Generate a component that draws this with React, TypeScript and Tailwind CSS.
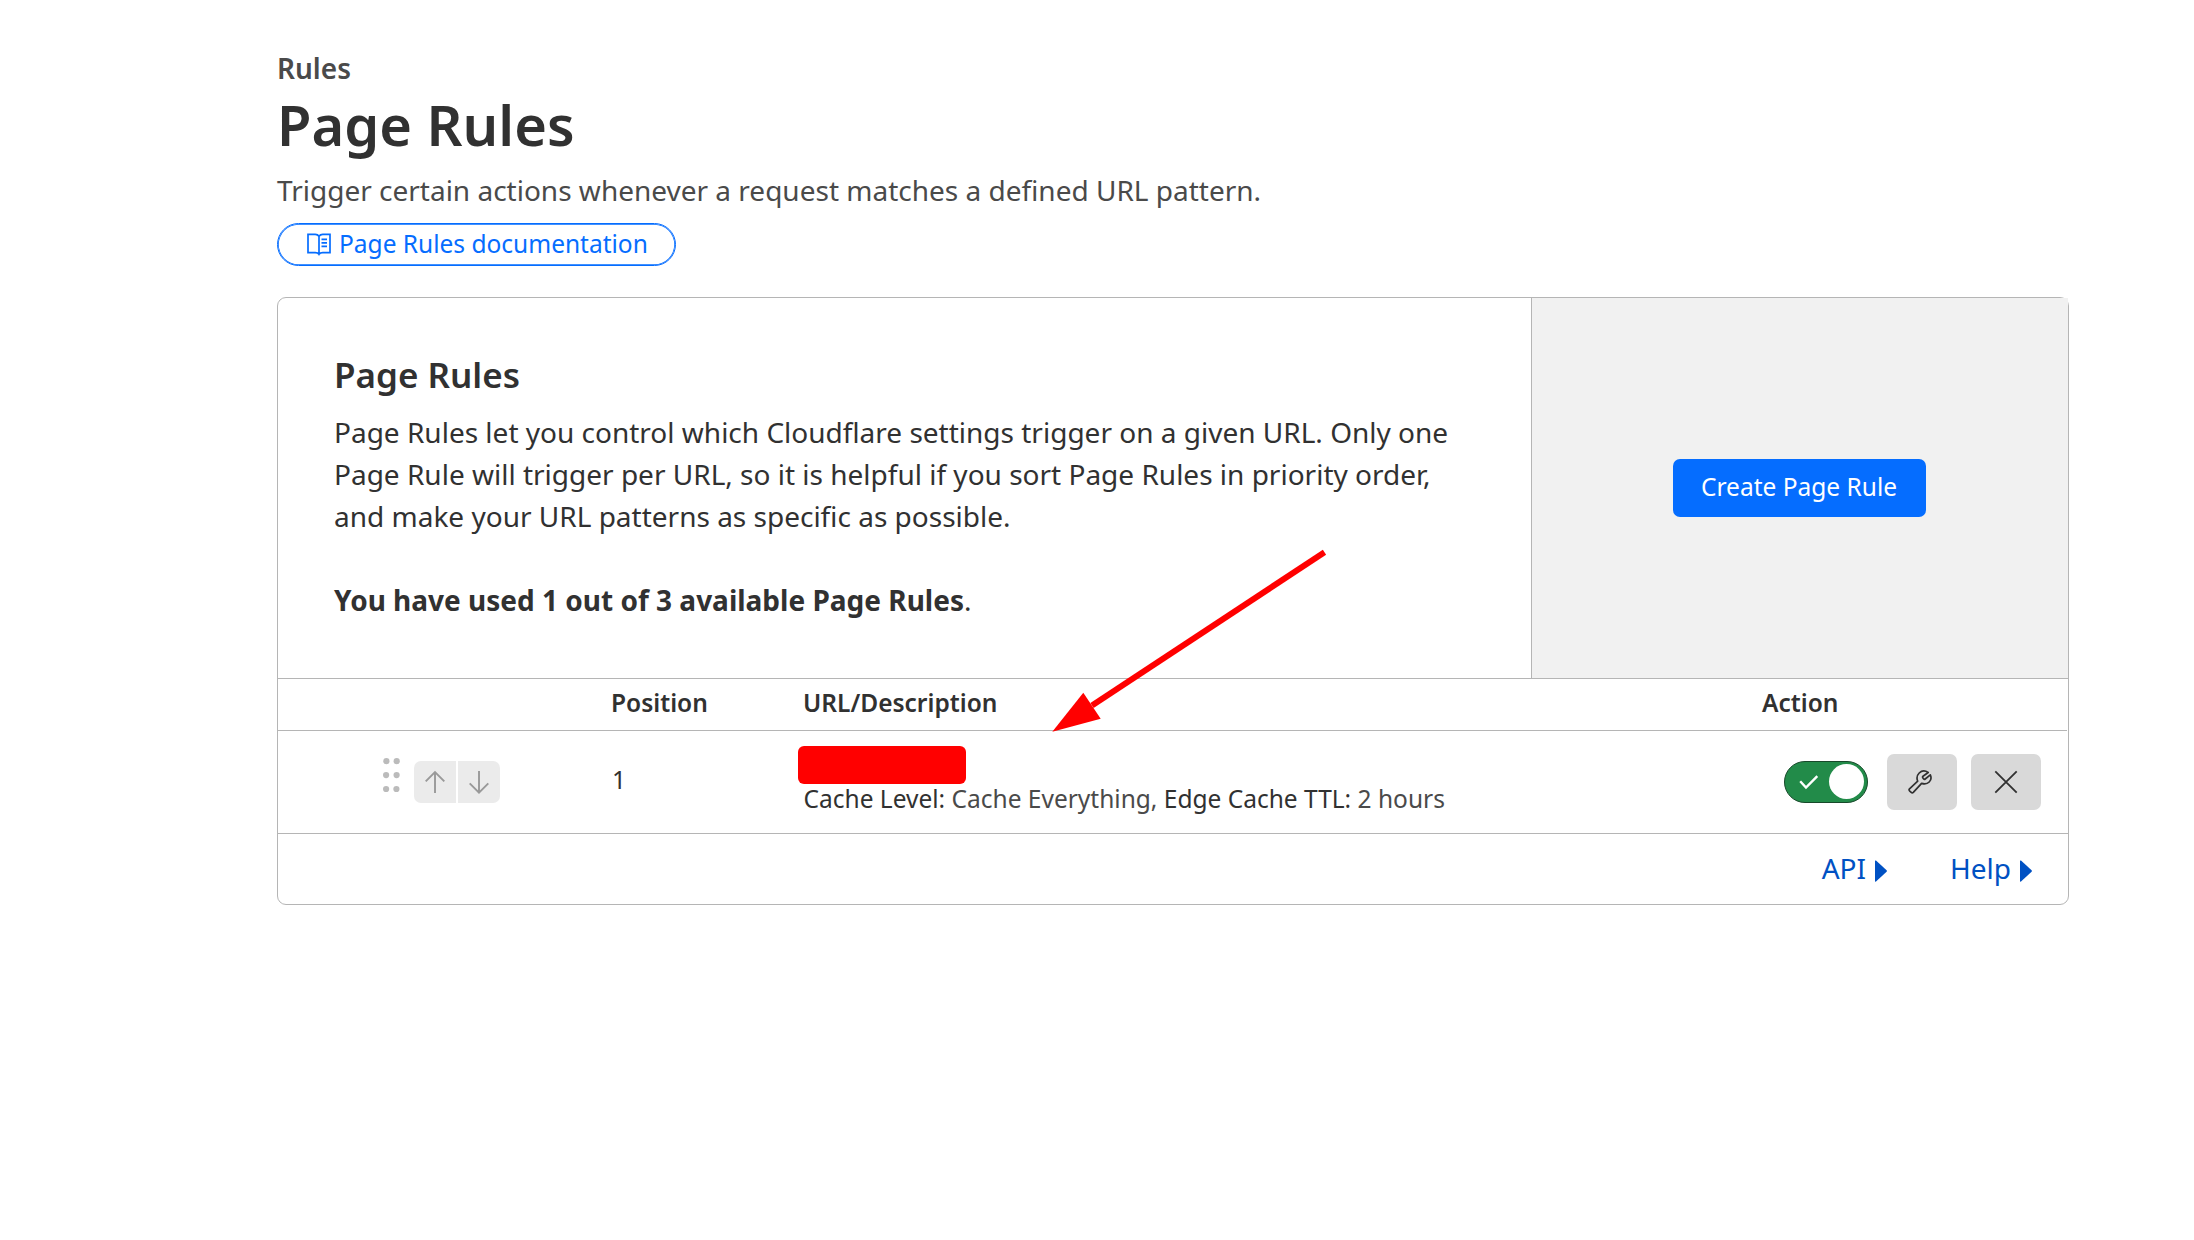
import React from "react";

function BookIcon() {
  return (
    <svg className="h-6 w-6" viewBox="0 0 24 24" fill="none" stroke="currentColor" strokeWidth="1.7">
      <path d="M12 3.2C11 1.7 9.8 1.3 8.3 1.3H1V19.7H8.3C10 19.7 11.2 20.2 12 21.4C12.8 20.2 14 19.7 15.7 19.7H23V1.3H15.7C14.2 1.3 13 1.7 12 3.2ZM12 3.2V21" />
      <path d="M14.5 6.3H20M14.5 9.8H20M14.5 13.3H20" />
    </svg>
  );
}

function DragHandle() {
  return (
    <svg className="h-9 w-[18px]" viewBox="0 0 18 36" fill="#bbbbbb">
      <circle cx="4.4" cy="4.2" r="3.1" />
      <circle cx="14.7" cy="4.2" r="3.1" />
      <circle cx="4.1" cy="18.1" r="3.1" />
      <circle cx="14.6" cy="18.1" r="3.1" />
      <circle cx="4.1" cy="32" r="3.1" />
      <circle cx="14.4" cy="32" r="3.1" />
    </svg>
  );
}

function WrenchIcon() {
  return (
    <svg className="h-6 w-6" viewBox="0 0 24 24" fill="none" stroke="currentColor" strokeWidth="1.7" strokeLinejoin="round">
      <path d="M20.2 2.5L15 6.2C14.500 6.600 14.500 7.200 14.800 7.700L15.700 8.900C16.100 9.400 16.700 9.400 17.200 9L22.300 4.900C23.500 7.500 23 10.200 21.200 12C19.200 14 16.300 14.200 13.600 13.400L5.300 22.400C4.600 23.100 3.900 23.100 3.200 22.400L1.500 20.800C0.900 20.100 0.900 19.500 1.500 18.800L9.700 11.200C8.500 8.200 9 5.200 11.200 3C13.600 0.700 17.300 0.500 20.200 2.500Z" />
    </svg>
  );
}

function Caret() {
  return (
    <svg className="h-[22px] w-3" viewBox="0 0 12 22" fill="currentColor">
      <path d="M0 1Q0 0 1 .6L11.600 10.300Q12.200 11 11.600 11.700L1 21.400Q0 22 0 21Z" />
    </svg>
  );
}

export default function App() {
  return (
    <div className="relative min-h-[1240px] w-[2194px] bg-white pt-[47px] pl-[277px] font-['Noto_Sans',sans-serif] text-[28px] leading-[42px] text-[#313131]">
      <header className="flex flex-col items-start">
        <div className="font-semibold text-[#4a4a4a]">Rules</div>
        <h1 className="text-[56px] leading-[70px] font-semibold">Page Rules</h1>
        <p className="mt-2.5 text-[#4a4a4a]">Trigger certain actions whenever a request matches a defined URL pattern.</p>
        <a className="mt-3 flex h-[43px] w-[399px] items-center rounded-full border border-[#056dff] pl-[29px] text-[24.5px] leading-[37px] text-[#056dff] shadow-[inset_0_0_0_0.75px_#056dff]">
          <BookIcon />
          <span className="ml-2 pb-0.5">Page Rules documentation</span>
        </a>
      </header>

      <main className="mt-[31px] flex h-[608px] w-[1792px] flex-col rounded-[9px] border border-[#b5b5b5]">
        <section className="flex h-[381px] border-b border-[#b5b5b5]">
          <div className="w-[1253px] px-14 pt-[57px]">
            <h2 className="text-[35px] leading-10 font-semibold">Page Rules</h2>
            <p className="mt-4">
              Page Rules let you control which Cloudflare settings trigger on a given URL. Only one Page Rule will trigger per URL, so it is helpful if you sort Page Rules in priority order, and make your URL patterns as specific as possible.
            </p>
            <p className="mt-[42px]">
              <b className="font-bold">You have used 1 out of 3 available Page Rules</b>.
            </p>
          </div>
          <div className="flex flex-1 items-center justify-center border-l border-[#b5b5b5] bg-[#f1f1f1] pr-0.5">
            <button className="h-[58px] w-[253px] rounded-[7px] bg-[#056dff] pb-1 text-[24.5px] leading-[37px] text-white">Create Page Rule</button>
          </div>
        </section>

        <section className="mr-px grid h-[52px] grid-cols-[333px_192px_959px_1fr] items-center border-b border-[#b5b5b5] pb-1 text-[24.5px] leading-[37px] font-semibold">
          <div />
          <div>Position</div>
          <div>URL/Description</div>
          <div>Action</div>
        </section>

        <section className="grid h-[103px] grid-cols-[333px_187px_986px_1fr] border-b border-[#b5b5b5] text-[24.5px] leading-[37px]">
          <div className="flex pl-[104px]">
            <div className="mt-[26px]"><DragHandle /></div>
            <div className="mt-[30px] ml-[14px] flex h-[42px] gap-0.5 text-[#999999]">
              <button className="flex w-[42px] items-center justify-center rounded-l-[7px] bg-[#ebebeb]">
                <svg className="h-6 w-6" viewBox="0 0 24 24" fill="none" stroke="currentColor" strokeWidth="1.9"><path d="M12 23V2M2.700 11.300L12 2L21.300 11.300" /></svg>
              </button>
              <button className="flex w-[42px] items-center justify-center rounded-r-[7px] bg-[#ebebeb]">
                <svg className="h-6 w-6" viewBox="0 0 24 24" fill="none" stroke="currentColor" strokeWidth="1.9"><path d="M12 1V22.500M2.700 13.300L12 22.600L21.300 13.300" /></svg>
              </button>
            </div>
          </div>
          <div className="pt-[30px] pl-px">1</div>
          <div className="pt-[15px]">
            <div className="h-[38px] w-[168px] rounded-[6px] bg-[#ff0000]" />
            <div className="-mt-1 pl-[5.5px] text-[#4a4a4a]">
              <span className="text-[#313131]">Cache Level:</span> Cache Everything, <span className="text-[#313131]">Edge Cache TTL:</span> 2 hours
            </div>
          </div>
          <div className="flex items-center">
            <div className="flex h-[42px] w-[84px] items-center rounded-full border border-[#17492a] bg-[#228b49] pl-3.5 pr-[3px]">
              <svg className="h-[18px] w-5" viewBox="0 0 20 18" fill="none" stroke="white" strokeWidth="2.4"><path d="M1.200 8.200L7 14.500L18.300 3.200" /></svg>
              <span className="ml-auto h-[35px] w-[35px] -translate-y-px rounded-full bg-white" />
            </div>
            <button className="ml-[19px] flex h-14 w-[70px] items-center justify-center rounded-[7px] bg-[#d9d9d9] pr-1"><WrenchIcon /></button>
            <button className="ml-3.5 flex h-14 w-[70px] items-center justify-center rounded-[7px] bg-[#d9d9d9]">
              <svg className="h-6 w-6" viewBox="0 0 24 24" fill="none" stroke="currentColor" strokeWidth="1.8"><path d="M1.300 1.300L22.700 22.700M22.700 1.300L1.300 22.700" /></svg>
            </button>
          </div>
        </section>

        <footer className="flex flex-1 justify-end gap-[63px] pt-[13px] pr-9 text-[#0051c3]">
          <a className="flex items-start gap-[9px]">API<span className="mt-[13px]"><Caret /></span></a>
          <a className="flex items-start gap-[9px]">Help<span className="mt-[13px]"><Caret /></span></a>
        </footer>
      </main>

      <svg className="pointer-events-none absolute top-[545px] left-[1045px] h-[195px] w-[290px]" viewBox="1045 545 290 195">
        <path d="M1324.500 552.200L1092 705.500" stroke="#ff0000" strokeWidth="6" />
        <path d="M1052.300 731.700L1083.300 692.700L1100.700 718.700Z" fill="#ff0000" />
      </svg>
    </div>
  );
}
